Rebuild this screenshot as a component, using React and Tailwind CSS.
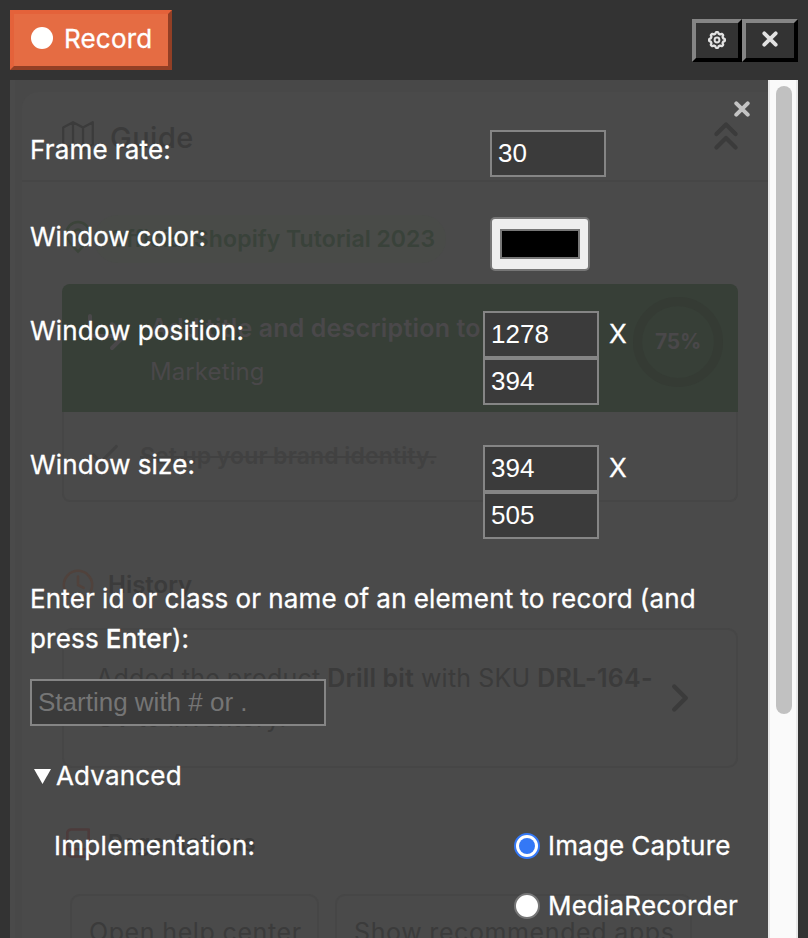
import React from "react";
import { ChevronsUp, Clock, Check, ChevronRight } from "lucide-react";

const field =
  "block h-[47px] border-2 border-[#858585] bg-[#3b3b3b] px-[6px] font-['Liberation_Sans',Arial,sans-serif] text-[26px] tracking-normal [word-spacing:0] [-webkit-text-stroke:0] text-white placeholder:text-[#757575] outline-none rounded-none";

function Cross({ size, width, color }) {
  return (
    <svg width={size} height={size} viewBox="0 0 16 16" fill="none" stroke={color} strokeWidth={width} strokeLinecap="round">
      <path d="M2.3 2.3 13.7 13.7M13.7 2.3 2.3 13.7" />
    </svg>
  );
}

function Gear() {
  const points = [];
  for (let i = 0; i < 96; i++) {
    const a = (i / 96) * Math.PI * 2;
    const r = 7.1 + 0.8 * Math.tanh(2.2 * Math.cos(8 * a));
    points.push(`${(9 + r * Math.cos(a)).toFixed(2)},${(9 + r * Math.sin(a)).toFixed(2)}`);
  }
  return (
    <svg width="18" height="18" viewBox="0 0 18 18" fill="none" stroke="#e2e2e2">
      <polygon points={points.join(" ")} strokeWidth="2.3" strokeLinejoin="round" />
      <circle cx="9" cy="9" r="2.4" strokeWidth="2" />
    </svg>
  );
}

function GuidePage() {
  return (
    <div className="col-start-1 row-start-1 flex h-[858px] w-[758px] overflow-hidden bg-[#4a4a4a] pl-[5px] text-[#3b3b3b]">
      <div className="h-full w-[753px] bg-[#484848] pl-[7px] pt-3">
        <div className="h-full rounded-tl-[16px] bg-[#4a4a4a]">
          <div className="flex h-[90px] items-center border-b-2 border-[#464646] pl-10 pr-[20px]">
            <svg width="32" height="30" viewBox="0 0 32 30" fill="none" stroke="currentColor" strokeWidth="2.2" strokeLinejoin="round">
              <path d="M1.2 6.5 11 1.2 21 6.5 30.8 1.2V23.5L21 28.8 11 23.5 1.2 28.8ZM11 1.2V23.5M21 6.5V28.8" />
            </svg>
            <span className="ml-[16px] mt-[4px] grow text-[29px] font-medium leading-8 tracking-[0.5px]">Guide</span>
            <ChevronsUp size={46} strokeWidth={2.2} className="mr-[-1px]" />
          </div>
          <div className="flex h-[102px] items-start pl-10">
            <svg width="32" height="34" viewBox="0 0 32 34" fill="none" stroke="#3c443a" strokeWidth="2.4" className="mt-[38px]">
              <path d="M16 31.5 C8 24 4.5 19 4.5 13.5 A11.5 11.5 0 0 1 27.5 13.5 C27.5 19 24 24 16 31.5Z" />
              <circle cx="16" cy="13.5" r="4" />
            </svg>
            <span className="mt-[33px] h-[48px] w-[352px] whitespace-nowrap rounded-full bg-[#494b48] pl-[14px] text-[23px] font-semibold leading-[48px] tracking-[0.12px] text-[#39423a]">
              Official Shopify Tutorial 2023
            </span>
          </div>
          <div className="ml-10 flex h-[128px] w-[676px] rounded-t-[8px] bg-[#373f37] text-[#4a484a]">
            <svg width="44" height="44" viewBox="0 0 44 44" fill="none" stroke="currentColor" strokeWidth="4" strokeLinecap="round" strokeLinejoin="round" className="ml-5 mt-[23px]">
              <path d="M8 9V25A4 4 0 0 0 12 29H40M30 17 42 29 30 41" />
            </svg>
            <div className="ml-6 w-[483px] shrink-0 whitespace-nowrap">
              <div className="mt-[28px] text-[25px] font-semibold leading-8 tracking-[0.25px]">Add title and description to pages.</div>
              <div className="mt-3 text-[24px] leading-8 tracking-[0.1px]">Marketing</div>
            </div>
            <div className="mt-[13px] flex size-[90px] shrink-0 items-center justify-center rounded-full border-[9px] border-[#353b34] text-[21px] font-bold tracking-[-0.3px]">
              75%
            </div>
          </div>
          <div className="ml-10 flex h-[90px] w-[676px] items-start rounded-b-[8px] border-2 border-t-0 border-[#464646] pl-6 pt-7 text-[#414141]">
            <Check size={34} strokeWidth={2.2} className="mt-[-2px]" />
            <span className="ml-[18px] whitespace-nowrap text-[23px] font-semibold leading-8 tracking-[0.15px] line-through decoration-2">Set up your brand identity.</span>
          </div>
          <div className="mt-[66px] flex h-[34px] items-center pl-10 text-[24px] font-semibold tracking-normal">
            <Clock size={34} strokeWidth={1.8} className="-ml-[1px] text-[#50423c]" />
            <span className="ml-[13px]">History</span>
          </div>
          <div className="ml-10 mt-[26px] flex h-[140px] w-[676px] items-center rounded-[10px] border-2 border-[#464646] pl-[32px]">
            <p className="w-[570px] whitespace-nowrap text-[25px] leading-10 tracking-[0.25px]">
              Added the product <b className="font-semibold">Drill bit</b> with SKU <b className="font-semibold">DRL-164-<br />GT</b> to inventory.
            </p>
            <ChevronRight size={46} strokeWidth={2.3} className="ml-[-9px]" />
          </div>
          <div className="mt-[58px] flex h-[34px] items-center pl-10 text-[23px] font-semibold">
            <svg width="33" height="34" viewBox="0 0 33 34" fill="none" stroke="#4c3b3b" strokeWidth="2.6" strokeLinejoin="round">
              <path d="M5.3 26V6.5A4 4 0 0 1 9.3 3.5H26.7V30.5H9A3.7 3.7 0 0 1 9 23.2H26.7" />
            </svg>
            <span className="ml-[13px]">Page Actions</span>
          </div>
          <div className="ml-12 mt-[34px] flex gap-4 whitespace-nowrap text-[25px] leading-[72px] tracking-[0.6px]">
            <div className="h-20 w-[249px] rounded-[10px] border-2 border-[#464646] pl-[17px]">Open help center</div>
            <div className="h-20 w-[357px] rounded-[10px] border-2 border-[#464646] pl-[17px]">Show recommended apps</div>
          </div>
        </div>
      </div>
    </div>
  );
}

function PairRow({ label, first, second }) {
  return (
    <div className="flex h-[134px] items-start">
      <span className="w-[453px] leading-10">{label}</span>
      <div>
        <input className={`${field} w-[116px]`} defaultValue={first} />
        <input className={`${field} w-[116px]`} defaultValue={second} />
      </div>
      <span className="ml-[10px] mt-[3px] leading-10">X</span>
    </div>
  );
}

function Radio({ checked, label }) {
  return (
    <label className="flex h-[60px] items-start">
      {checked ? (
        <span className="mt-[7px] flex size-[26px] items-center justify-center rounded-full border-2 border-[#3478f6] bg-white">
          <span className="size-4 rounded-full bg-[#3478f6]" />
        </span>
      ) : (
        <span className="mt-[7px] size-[26px] rounded-full border-2 border-[#767676] bg-white" />
      )}
      <span className="ml-2 leading-10">{label}</span>
    </label>
  );
}

function Settings() {
  return (
    <div className="z-10 col-start-1 row-start-1 h-[858px] w-[758px] overflow-hidden pl-5 text-white [-webkit-text-stroke:0.3px_white]">
      <div className="flex h-[50px] justify-end pr-[18px] pt-[21px]">
        <Cross size={16} width={4} color="#c4c4c4" />
      </div>
      <div className="flex h-[87px] items-start">
        <span className="w-[460px] leading-10">Frame rate:</span>
        <input className={`${field} w-[116px]`} defaultValue="30" />
      </div>
      <div className="flex h-[94px] items-start">
        <span className="w-[460px] leading-10 tracking-normal">Window color:</span>
        <span className="flex h-[54px] w-[100px] items-center justify-center rounded-[5px] border-2 border-[#767676] bg-[#efefef]">
          <span className="h-[30px] w-20 border-2 border-[#777] bg-black" />
        </span>
      </div>
      <PairRow label="Window position:" first="1278" second="394" />
      <PairRow label="Window size:" first="394" second="505" />
      <p className="whitespace-nowrap leading-10">
        Enter id or class or name of an element to record (and
        <br />
        press <b className="font-medium">Enter</b>):
      </p>
      <input className={`${field} mt-5 w-[296px]`} placeholder="Starting with # or ." />
      <div className="mt-[30px] flex h-10 items-center pl-1">
        <svg width="17" height="15" viewBox="0 0 17 15" fill="white">
          <path d="M0 0H17L8.5 15Z" />
        </svg>
        <span className="ml-[5px] mt-[-2px]">Advanced</span>
      </div>
      <div className="mt-[30px] flex items-start pl-6">
        <span className="w-[460px] leading-10 tracking-[0.3px]">Implementation:</span>
        <div>
          <Radio checked label="Image Capture" />
          <Radio label="MediaRecorder" />
        </div>
      </div>
    </div>
  );
}

export default function App() {
  return (
    <div className="flex h-[938px] w-[808px] flex-col overflow-hidden bg-[#333] px-[10px] font-[Inter,sans-serif] text-[26px] font-normal tracking-[0.18px] [word-spacing:-0.5px]">
      <header className="flex h-20 shrink-0 items-start justify-between pt-[10px]">
        <button className="flex h-[60px] w-[162px] items-center border-4 border-t-[#e4623a] border-l-[#e4623a] border-r-[#923f25] border-b-[#923f25] bg-[#e56c43] pb-[3px] pl-[17px] text-white">
          <span className="mt-[-1px] size-[22px] rounded-full bg-white" />
          <span className="ml-[11px] [-webkit-text-stroke:0.3px_white]">Record</span>
        </button>
        <div className="mt-[9px] flex">
          <button className="flex h-[43px] w-[50px] items-center justify-center border-4 border-t-[#858585] border-l-[#858585] border-r-black border-b-black pb-[1px]">
            <Gear />
          </button>
          <button className="flex h-[43px] w-[56px] items-center justify-center border-4 border-t-[#858585] border-l-[#858585] border-r-black border-b-black pb-[3px]">
            <Cross size={16} width={3.8} color="#e2e2e2" />
          </button>
        </div>
      </header>
      <main className="flex h-[858px]">
        <div className="grid h-[858px] w-[758px] overflow-hidden">
          <GuidePage />
          <Settings />
        </div>
        <div className="h-[858px] w-[30px] border-x-2 border-[#e8e8e8] bg-[#fafafa] pl-[6px] pt-[6px]">
          <div className="h-[628px] w-4 rounded-full bg-[#c1c1c1]" />
        </div>
      </main>
    </div>
  );
}
